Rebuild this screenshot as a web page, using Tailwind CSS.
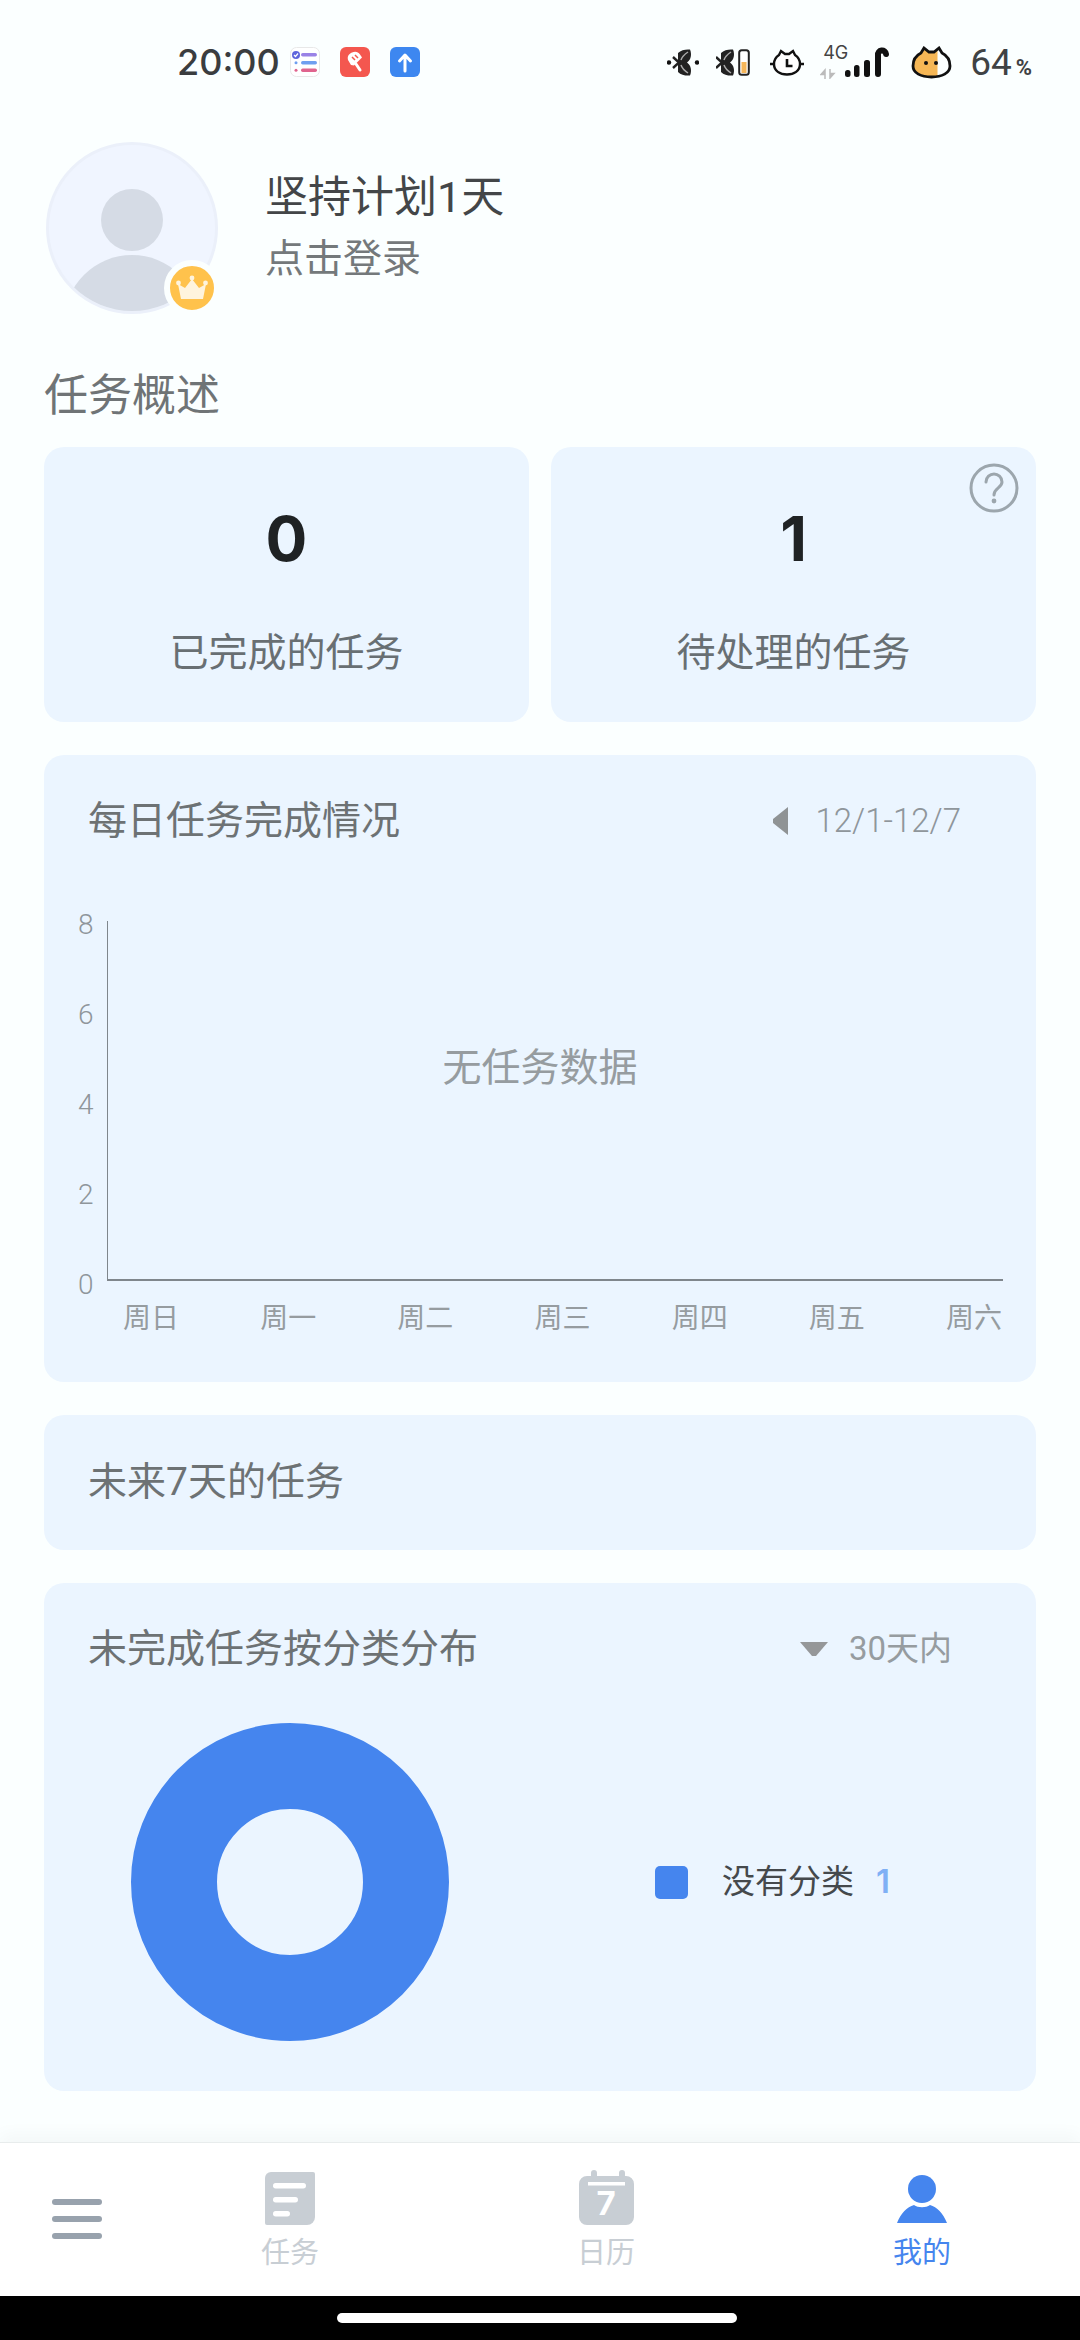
<!DOCTYPE html>
<html lang="en">
<head>
    <meta charset="UTF-8">
    <meta name="viewport" content="width=device-width, initial-scale=1.0">
    <title>我的</title>
    <script src="https://cdn.jsdelivr.net/npm/@tailwindcss/browser@4"></script>
</head>
<body class="bg-[#fbffff]">
<div class="w-[1080px] h-[2340px] flex flex-col overflow-hidden bg-[#fbffff] font-['Roboto','Noto_Sans_CJK_SC',sans-serif]">

    <!-- status bar -->
    <div class="h-[124px] shrink-0 flex items-center pl-[177px] pr-[48px]">
        <span class="text-[36px] font-medium text-[#3a3d3f] leading-none font-['Inter','Noto_Sans_CJK_SC',sans-serif]">20:00</span>
        <div class="flex gap-[20px] ml-[10px]">
            <svg width="30" height="30" viewBox="0 0 30 30"><rect x=".5" y=".5" width="29" height="29" rx="6" fill="#fff" stroke="#e8e8e8"/><circle cx="6" cy="8" r="4" fill="#5f66dc"/><path d="M4 8l1.5 1.5L8 6.5" stroke="#fff" stroke-width="1.2" fill="none"/><rect x="11" y="6" width="16" height="3.4" rx="1.7" fill="#9a82e6"/><rect x="11" y="14" width="16" height="3.4" rx="1.7" fill="#6f9ff0"/><rect x="11" y="21.5" width="16" height="3.4" rx="1.7" fill="#e0648e"/><circle cx="6" cy="15.7" r="1.5" fill="#6f9ff0"/><circle cx="6" cy="23.2" r="1.5" fill="#e0648e"/></svg>
            <svg width="30" height="30" viewBox="0 0 30 30"><rect width="30" height="30" rx="6" fill="#f4574f"/><path d="M8 13c-1-4 1-6 4-7.500 3-1.500 6-1 8 2l2 3-8 8-3-.5z" fill="#fff"/><path d="M16 17l4 6" stroke="#fff" stroke-width="3" stroke-linecap="round"/><path d="M12 10l3 3M15 8l3 3" stroke="#f4574f" stroke-width="1.500"/></svg>
            <svg width="30" height="30" viewBox="0 0 30 30"><rect width="30" height="30" rx="6" fill="#3d87f0"/><path d="M15 24V9M9.500 14L15 8l5.500 6" stroke="#fff" stroke-width="3" fill="none" stroke-linecap="round" stroke-linejoin="round"/></svg>
        </div>
        <div class="ml-auto flex items-center">
            <svg width="32" height="27" viewBox="0 0 32 27" class="mr-[17px]"><circle cx="2" cy="13.500" r="2.200" fill="#111"/><circle cx="30" cy="13.500" r="2.200" fill="#111"/><path d="M6 8l6 5.500L6 19" stroke="#222" stroke-width="2.400" fill="none"/><path d="M11 13.500V4c3-3 8-4 12-3.500 2 5 1 10-3 13 4 3 5 8 3 13-4 .5-9-.5-12-3.500z" fill="#222"/><path d="M14 11c1-3 4-6 7-8M14 16c1 3 4 6 7 8" stroke="#aaa" stroke-width="1.500" fill="none"/></svg>
            <svg width="34" height="27" viewBox="0 0 34 27" class="mr-[20px]"><path d="M0 8l6 5.500L0 19" stroke="#222" stroke-width="2.400" fill="none"/><path d="M5 13.500V4c3-3 8-4 12-3.500 2 5 1 10-3 13 4 3 5 8 3 13-4 .5-9-.5-12-3.500z" fill="#222"/><path d="M8 11c1-3 4-6 7-8M8 16c1 3 4 6 7 8" stroke="#aaa" stroke-width="1.500" fill="none"/><rect x="23.200" y="1.200" width="9.600" height="24.600" rx="2.500" fill="#fff" stroke="#222" stroke-width="2"/><rect x="25.500" y="13" width="5" height="11" fill="#f5b65a"/></svg>
            <svg width="34" height="27" viewBox="0 0 34 27" class="mr-[16px]"><path d="M4 15C4 10 6 8 9 6l2-4 4 3h4l4-3 2 4c3 2 5 4 5 9 0 7-6 10.500-13 10.500S4 22 4 15z" fill="#fff" stroke="#111" stroke-width="2.400"/><path d="M0 15h3M31 15h3" stroke="#111" stroke-width="2.400"/><path d="M17 10v7h5.500" stroke="#111" stroke-width="2.600" fill="none"/></svg>
            <div class="relative w-[69px] h-[33px] mr-[22px]">
                <span class="absolute left-[3px] top-[-2px] text-[18px] text-[#444] leading-none font-['Inter',sans-serif]">4G</span>
                <svg width="70" height="33" viewBox="0 0 70 33" class="absolute left-0 top-0"><path d="M5 33v-9l-4 4.500h4zM10 23v9l4-4.500h-4z" fill="#bbb" stroke="#bbb" stroke-width="1.500"/><rect x="25" y="24" width="5.500" height="7" rx="2.500" fill="#111"/><rect x="34" y="19" width="5.500" height="12" rx="2.500" fill="#111"/><rect x="44" y="14" width="6" height="17" rx="2.500" fill="#111"/><path d="M58 28V9a4 4 0 0 1 8-1" stroke="#111" stroke-width="6" fill="none" stroke-linecap="round"/></svg>
            </div>
            <svg width="41" height="33" viewBox="0 0 41 33" class="mr-[18px]"><defs><clipPath id="catLeft"><rect x="0" y="0" width="26.500" height="33"/></clipPath></defs><path d="M2 20C2 13 6 9 10 7l3-5 5 4h5l5-4 3 5c4 2 8 6 8 13 0 7-8 11-18.500 11S2 27 2 20z" fill="#f6b755" clip-path="url(#catLeft)"/><path d="M2 20C2 13 6 9 10 7l3-5 5 4h5l5-4 3 5c4 2 8 6 8 13 0 7-8 11-18.500 11S2 27 2 20z" fill="none" stroke="#111" stroke-width="2.800"/><circle cx="15" cy="17" r="2" fill="#111"/><circle cx="25" cy="17" r="2" fill="#111"/></svg>
            <span class="text-[37px] text-[#3f4244] leading-none">64</span><span class="text-[22px] font-bold text-[#3f4244] leading-none mt-[11px] ml-[4px]">%</span>
        </div>
    </div>

    <!-- profile -->
    <div class="h-[200px] shrink-0 flex pl-[46px] pt-[18px]">
        <div class="relative w-[172px] h-[172px]">
            <div class="w-[172px] h-[172px] rounded-full bg-[#f0f5ff] border-[3px] border-[#ebf0fa] overflow-hidden flex flex-col items-center">
                <div class="w-[62px] h-[62px] shrink-0 rounded-full bg-[#d5dbe5] mt-[44px]"></div>
                <div class="w-[136px] h-[136px] shrink-0 rounded-full bg-[#d5dbe5] mt-[4px]"></div>
            </div>
            <div class="absolute left-[118px] top-[118px] w-[56px] h-[56px] rounded-full bg-[#ffc24c] border-[6px] border-[#fbffff] flex items-center justify-center">
                <svg width="32" height="26" viewBox="0 0 32 26"><path d="M5 24h22l3-15-7 4-7-9-7 9-7-4z" fill="#fff4dd"/><circle cx="16" cy="3" r="2.400" fill="#fff4dd"/><circle cx="2.500" cy="8" r="2.400" fill="#fff4dd"/><circle cx="29.500" cy="8" r="2.400" fill="#fff4dd"/></svg>
            </div>
        </div>
        <div class="ml-[47px] pt-[27px]">
            <div class="text-[43px] leading-[56px] text-[#434648]">坚持计划1天</div>
            <div class="text-[39px] leading-[50px] text-[#74797b] mt-[9px]">点击登录</div>
        </div>
    </div>

    <div class="h-[123px] shrink-0 flex items-center pl-[44px] pt-[21px] text-[44px] text-[#6f7476]">任务概述</div>

    <!-- content -->
    <div class="flex flex-col gap-[33px] px-[44px]">
        <div class="grid grid-cols-2 gap-[22px] h-[275px]">
            <div class="bg-[#ebf5ff] rounded-[20px] flex flex-col items-center pt-[59px]">
                <div class="text-[62px] font-bold leading-[66px] text-[#1f2224] font-['Inter',sans-serif]">0</div>
                <div class="text-[39px] leading-[50px] text-[#686f73] mt-[56px]">已完成的任务</div>
            </div>
            <div class="relative bg-[#ebf5ff] rounded-[20px] flex flex-col items-center pt-[59px]">
                <div class="text-[62px] font-bold leading-[66px] text-[#1f2224] font-['Inter',sans-serif]">1</div>
                <div class="text-[39px] leading-[50px] text-[#686f73] mt-[56px]">待处理的任务</div>
                <svg width="50" height="50" viewBox="0 0 50 50" class="absolute right-[17px] top-[16px]"><circle cx="25" cy="25" r="23" fill="none" stroke="#9ca6ad" stroke-width="3"/><path d="M17 19c0-5 4-8 8-8s8 3 8 8c0 6-8 6-8 13" fill="none" stroke="#9ca6ad" stroke-width="3" stroke-linecap="round"/><circle cx="25" cy="38" r="2.400" fill="#9ca6ad"/></svg>
            </div>
        </div>

        <div class="bg-[#ebf5ff] rounded-[20px] h-[627px] flex flex-col">
            <div class="flex items-center h-[130px] pl-[44px] pt-[2px]">
                <span class="text-[39px] text-[#6d7274]">每日任务完成情况</span>
                <svg width="20" height="30" viewBox="0 0 20 30" class="ml-auto mr-[24px]"><path d="M17 1v28L2 17v-4z" fill="#8f9395"/></svg>
                <span class="text-[33px] font-light text-[#8f969b] mr-[75px]">12/1-12/7</span>
            </div>
            <div class="relative flex-1">
                <div class="absolute left-[63px] top-[36px] w-[1px] h-[360px] bg-[#7f868c]"></div>
                <div class="absolute left-[63px] top-[394px] right-[33px] h-[2px] bg-[#7f868c]"></div>
                <div class="absolute left-[34px] top-[24px] h-[392px] flex flex-col justify-between text-[28px] font-light leading-[32px] text-[#8f969b]">
                    <span>8</span><span>6</span><span>4</span><span>2</span><span>0</span>
                </div>
                <div class="absolute left-0 right-0 top-[158px] text-center text-[39px] leading-[50px] text-[#969ca0]">无任务数据</div>
                <div class="absolute left-[79px] right-[34px] top-[416px] flex justify-between text-[28px] leading-[36px] text-[#969ca0]">
                    <span>周日</span><span>周一</span><span>周二</span><span>周三</span><span>周四</span><span>周五</span><span>周六</span>
                </div>
            </div>
        </div>

        <div class="bg-[#ebf5ff] rounded-[20px] h-[135px] flex items-center pl-[44px] text-[39px] text-[#6d7274]">未来7天的任务</div>

        <div class="bg-[#ebf5ff] rounded-[20px] h-[508px] flex flex-col">
            <div class="flex items-center h-[130px] pl-[44px] pt-[2px]">
                <span class="text-[39px] text-[#6d7274]">未完成任务按分类分布</span>
                <svg width="30" height="16" viewBox="0 0 30 16" class="ml-auto mr-[20px]"><path d="M1 1h28L17 15h-4z" fill="#959799"/></svg>
                <span class="text-[33px] text-[#969ca0] mr-[84px]">30天内</span>
            </div>
            <div class="flex items-center mt-[10px]">
                <svg width="318" height="318" viewBox="0 0 318 318" class="ml-[87px] shrink-0"><circle cx="159" cy="159" r="116" fill="none" stroke="#4585ee" stroke-width="86"/></svg>
                <div class="ml-[206px] w-[33px] h-[33px] rounded-[5px] bg-[#4585ee]"></div>
                <span class="ml-[34px] text-[33px] text-[#45494c]">没有分类</span>
                <span class="ml-[22px] text-[33px] font-semibold text-[#7fb0f5] font-['Inter',sans-serif]">1</span>
            </div>
        </div>
    </div>

    <!-- bottom nav -->
    <div class="mt-auto h-[154px] shrink-0 bg-white border-t-[1px] border-[#e8ecec] shadow-[0_-8px_16px_rgba(0,0,0,0.03)] flex">
        <div class="w-[132px] flex flex-col items-start pt-[56px] pl-[52px] gap-[11px]">
            <div class="w-[50px] h-[6px] bg-[#98a2ad] rounded-full"></div>
            <div class="w-[50px] h-[6px] bg-[#98a2ad] rounded-full"></div>
            <div class="w-[50px] h-[6px] bg-[#98a2ad] rounded-full"></div>
        </div>
        <div class="w-[316px] flex flex-col items-center pt-[29px]">
            <svg width="50" height="53" viewBox="0 0 50 53"><path d="M6 0h42a2 2 0 0 1 2 2v43a8 8 0 0 1-8 8H2a2 2 0 0 1-2-2V6a6 6 0 0 1 6-6z" fill="#c8ced4"/><rect x="8" y="11" width="33" height="5.500" rx="2.700" fill="#fff"/><rect x="8" y="25" width="25" height="5.500" rx="2.700" fill="#fff"/><rect x="8" y="39" width="17" height="5.500" rx="2.700" fill="#fff"/></svg>
            <span class="text-[29px] leading-[36px] text-[#c8ced4] mt-[10px]">任务</span>
        </div>
        <div class="w-[316px] flex flex-col items-center pt-[27px]">
            <svg width="55" height="55" viewBox="0 0 55 55"><path d="M12 3a3 3 0 0 1 6 0v3h22V3a3 3 0 0 1 6 0v3h1a8 8 0 0 1 8 8v33a8 8 0 0 1-8 8H8a8 8 0 0 1-8-8V14a8 8 0 0 1 8-8h4z" fill="#c8ced4"/><rect x="9" y="12" width="37" height="3.500" fill="#fff"/><text x="27" y="45" text-anchor="middle" font-family="Inter" font-weight="700" font-size="33" fill="#fff">7</text></svg>
            <span class="text-[29px] leading-[36px] text-[#c8ced4] mt-[10px]">日历</span>
        </div>
        <div class="w-[316px] flex flex-col items-center pt-[32px]">
            <svg width="50" height="48" viewBox="0 0 50 48"><circle cx="25" cy="14" r="14" fill="#4585ee"/><path d="M0 48c4-10 10-16 17-18 4 3 12 3 16 0 7 2 13 8 17 18z" fill="#4585ee"/></svg>
            <span class="text-[29px] leading-[36px] text-[#4585ee] mt-[12px]">我的</span>
        </div>
    </div>

    <!-- gesture bar -->
    <div class="h-[44px] shrink-0 bg-black flex justify-center pt-[17px] pr-[6px]">
        <div class="w-[400px] h-[10px] rounded-full bg-white"></div>
    </div>
</div>
</body>
</html>
